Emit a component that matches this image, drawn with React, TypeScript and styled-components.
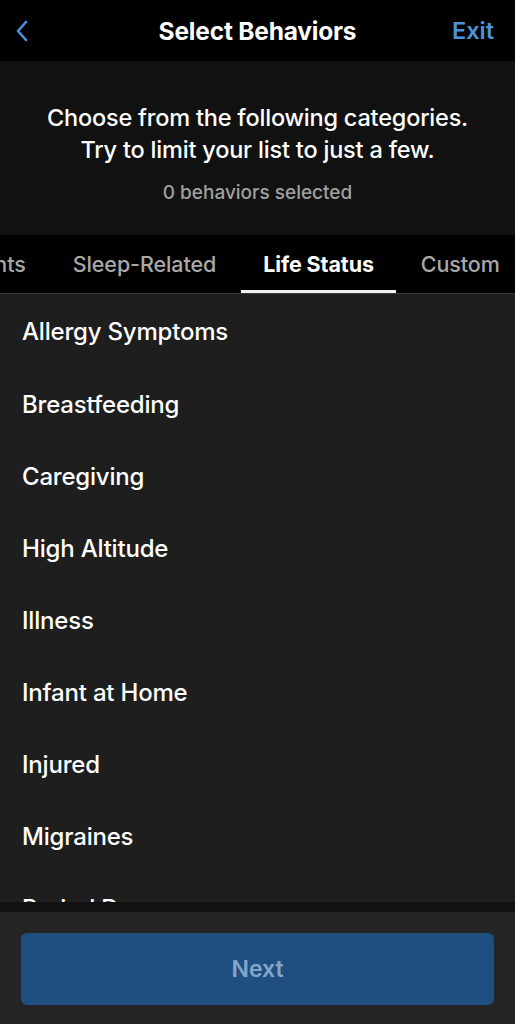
import { useEffect, useRef } from "react";
import styled, { createGlobalStyle } from "styled-components";

const GlobalStyle = createGlobalStyle`
  html, body {
    margin: 0;
    padding: 0;
    background: #000;
  }
  * {
    box-sizing: border-box;
  }
  body {
    font-family: Inter, "Noto Sans", sans-serif;
    color: #fff;
  }
`;

const Screen = styled.div`
  width: 515px;
  height: 1024px;
  display: flex;
  flex-direction: column;
  background: #000;
  overflow: hidden;
`;

const NavBar = styled.header`
  height: 61px;
  flex-shrink: 0;
  display: grid;
  grid-template-columns: 80px 1fr 80px;
  align-items: center;
  background: #000;
`;

const BackButton = styled.button`
  justify-self: start;
  margin-left: 14px;
  background: none;
  border: none;
  padding: 0;
  display: flex;
  align-items: center;
`;

const NavTitle = styled.h1`
  margin: 0;
  text-align: center;
  font-size: 24.5px;
  font-weight: 700;
  letter-spacing: -0.2px;
`;

const ExitLink = styled.button`
  justify-self: end;
  margin-right: 21px;
  background: none;
  border: none;
  padding: 0;
  color: #4c93dc;
  font-family: inherit;
  font-size: 23.5px;
  font-weight: 600;
`;

const Intro = styled.section`
  height: 174px;
  flex-shrink: 0;
  background: #111111;
  display: flex;
  flex-direction: column;
  align-items: center;
  padding-top: 41px;
`;

const IntroText = styled.p`
  margin: 0;
  text-align: center;
  font-size: 23.5px;
  font-weight: 500;
  line-height: 32px;
  letter-spacing: -0.2px;
`;

const Counter = styled.p`
  margin: 15px 0 0;
  font-size: 19px;
  font-weight: 500;
  color: #a0a0a0;
`;

const TabStrip = styled.nav`
  height: 59px;
  flex-shrink: 0;
  display: flex;
  overflow: hidden;
  background: #000;
  border-bottom: 1px solid #3a3a3a;
`;

const Tab = styled.div<{ $active?: boolean }>`
  flex-shrink: 0;
  display: flex;
  align-items: center;
  padding: 3px 22px 0;
  margin-right: 3px;
  font-size: 21.5px;
  font-weight: ${(p) => (p.$active ? 700 : 500)};
  color: ${(p) => (p.$active ? "#fff" : "#a9a9a9")};
  letter-spacing: -0.1px;
  white-space: nowrap;
  border-bottom: 3px solid ${(p) => (p.$active ? "#f2f2f2" : "transparent")};
`;

const List = styled.ul`
  flex: 1;
  margin: 0;
  padding: 0;
  list-style: none;
  background: #1e1e1e;
  overflow: hidden;
`;

const Item = styled.li`
  height: 72px;
  display: flex;
  align-items: center;
  padding-left: 22px;
  padding-top: 2px;
  font-size: 24px;
  font-weight: 500;
  letter-spacing: -0.2px;
  &:first-child {
    padding-top: 0;
    margin-top: 1px;
  }
`;

const Divider = styled.div`
  height: 10px;
  flex-shrink: 0;
  background: #111111;
`;

const Footer = styled.footer`
  height: 112px;
  flex-shrink: 0;
  background: #242424;
  padding: 21px 21px 0;
`;

const NextButton = styled.button`
  width: 100%;
  height: 72px;
  border: none;
  border-radius: 6px;
  background: #1f4e80;
  color: #86a6c9;
  font-family: inherit;
  font-size: 23px;
  font-weight: 600;
`;

const tabs = ["Supplements", "Sleep-Related", "Life Status", "Custom"];

const behaviors = [
  "Allergy Symptoms",
  "Breastfeeding",
  "Caregiving",
  "High Altitude",
  "Illness",
  "Infant at Home",
  "Injured",
  "Migraines",
  "Period Day",
  "Pregnant",
];

function Chevron() {
  return (
    <svg width="16" height="24" viewBox="0 0 16 24" fill="none">
      <path
        d="M12 3 L4 12 L12 21"
        stroke="#4c93dc"
        strokeWidth="2.6"
        strokeLinecap="round"
        strokeLinejoin="round"
      />
    </svg>
  );
}

function App() {
  const stripRef = useRef<HTMLElement>(null);
  const activeRef = useRef<HTMLDivElement>(null);

  useEffect(() => {
    if (stripRef.current && activeRef.current) {
      stripRef.current.scrollLeft = activeRef.current.offsetLeft - 241;
    }
  }, []);

  return (
    <>
      <GlobalStyle />
      <Screen>
        <NavBar>
          <BackButton>
            <Chevron />
          </BackButton>
          <NavTitle>Select Behaviors</NavTitle>
          <ExitLink>Exit</ExitLink>
        </NavBar>
        <Intro>
          <IntroText>
            Choose from the following categories.
            <br />
            Try to limit your list to just a few.
          </IntroText>
          <Counter>0 behaviors selected</Counter>
        </Intro>
        <TabStrip ref={stripRef}>
          {tabs.map((t) => (
            <Tab
              key={t}
              $active={t === "Life Status"}
              ref={t === "Life Status" ? activeRef : undefined}
            >
              {t}
            </Tab>
          ))}
        </TabStrip>
        <List>
          {behaviors.map((b) => (
            <Item key={b}>{b}</Item>
          ))}
        </List>
        <Divider />
        <Footer>
          <NextButton>Next</NextButton>
        </Footer>
      </Screen>
    </>
  );
}

export default App;
